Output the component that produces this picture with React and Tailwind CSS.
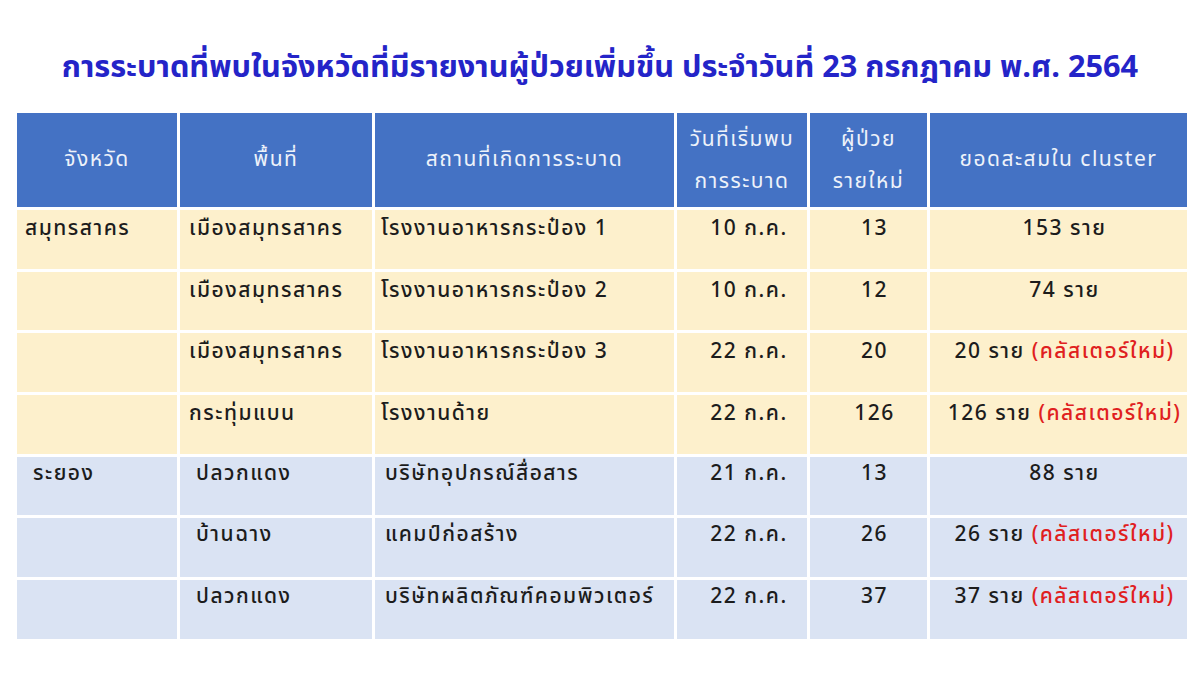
import React from "react";

const font = { fontFamily: '"Tahoma", "Noto Sans Thai", "Noto Sans", "DejaVu Sans", sans-serif' };

const rows = [
  { p: "สมุทรสาคร", a: "เมืองสมุทรสาคร", s: "โรงงานอาหารกระป๋อง 1", d: "10 ก.ค.", n: "13", c: "153 ราย", nw: false, y: true },
  { p: "", a: "เมืองสมุทรสาคร", s: "โรงงานอาหารกระป๋อง 2", d: "10 ก.ค.", n: "12", c: "74 ราย", nw: false, y: true },
  { p: "", a: "เมืองสมุทรสาคร", s: "โรงงานอาหารกระป๋อง 3", d: "22 ก.ค.", n: "20", c: "20 ราย", nw: true, y: true },
  { p: "", a: "กระทุ่มแบน", s: "โรงงานด้าย", d: "22 ก.ค.", n: "126", c: "126 ราย", nw: true, y: true },
  { p: "ระยอง", a: "ปลวกแดง", s: "บริษัทอุปกรณ์สื่อสาร", d: "21 ก.ค.", n: "13", c: "88 ราย", nw: false, y: false },
  { p: "", a: "บ้านฉาง", s: "แคมป์ก่อสร้าง", d: "22 ก.ค.", n: "26", c: "26 ราย", nw: true, y: false },
  { p: "", a: "ปลวกแดง", s: "บริษัทผลิตภัณฑ์คอมพิวเตอร์", d: "22 ก.ค.", n: "37", c: "37 ราย", nw: true, y: false },
];

export default function App() {
  return (
    <div className="w-[1200px] h-[675px] bg-white overflow-hidden" style={font}>
      <h1 className="pt-[46px] text-center text-[30.7px] leading-[44px] font-bold text-[#2424c8]">
        การระบาดที่พบในจังหวัดที่มีรายงานผู้ป่วยเพิ่มขึ้น ประจำวันที่ 23 กรกฎาคม พ.ศ. 2564
      </h1>
      <div className="ml-[17px] mt-[23px] grid grid-cols-[160px_192px_299px_130px_117px_257px] gap-[3px] text-[21px] font-medium tracking-[1.5px] text-[#1c1c1c]">
        <div className="h-[94px] bg-[#4472c4] text-[#eef2fa] font-normal flex items-center justify-center">จังหวัด</div>
        <div className="h-[94px] bg-[#4472c4] text-[#eef2fa] font-normal flex items-center justify-center">พื้นที่</div>
        <div className="h-[94px] bg-[#4472c4] text-[#eef2fa] font-normal flex items-center justify-center">สถานที่เกิดการระบาด</div>
        <div className="h-[94px] bg-[#4472c4] text-[#eef2fa] font-normal flex flex-col items-center justify-center leading-[42px] pt-[2px]">
          <span>วันที่เริ่มพบ</span>
          <span>การระบาด</span>
        </div>
        <div className="h-[94px] bg-[#4472c4] text-[#eef2fa] font-normal flex flex-col items-center justify-center leading-[42px] pt-[2px]">
          <span>ผู้ป่วย</span>
          <span>รายใหม่</span>
        </div>
        <div className="h-[94px] bg-[#4472c4] text-[#eef2fa] font-normal flex items-center justify-center">ยอดสะสมใน cluster</div>
        {rows.map((r, i) => (
          <React.Fragment key={i}>
            <div className={`h-[58.7px] leading-[28px] ${r.y ? "pt-[5px] bg-[#fdf0cc] pl-[8px]" : "pt-[3px] bg-[#dae3f3] pl-[16px]"}`}>{r.p}</div>
            <div className={`h-[58.7px] leading-[28px] ${r.y ? "pt-[5px] bg-[#fdf0cc] pl-[9px]" : "pt-[3px] bg-[#dae3f3] pl-[16px]"}`}>{r.a}</div>
            <div className={`h-[58.7px] leading-[28px] ${r.y ? "pt-[5px] bg-[#fdf0cc] pl-[6px]" : "pt-[3px] bg-[#dae3f3] pl-[10px]"}`}>{r.s}</div>
            <div className={`h-[58.7px] leading-[28px] text-center pl-[14px] ${r.y ? "pt-[5px] bg-[#fdf0cc]" : "pt-[3px] bg-[#dae3f3]"}`}>{r.d}</div>
            <div className={`h-[58.7px] leading-[28px] text-center pl-[12px] ${r.y ? "pt-[5px] bg-[#fdf0cc]" : "pt-[3px] bg-[#dae3f3]"}`}>{r.n}</div>
            <div className={`h-[58.7px] leading-[28px] text-center pl-[12px] whitespace-nowrap ${r.y ? "pt-[5px] bg-[#fdf0cc]" : "pt-[3px] bg-[#dae3f3]"}`}>
              {r.c}
              {r.nw && <span className="text-[#e0201e]"> (คลัสเตอร์ใหม่)</span>}
            </div>
          </React.Fragment>
        ))}
      </div>
    </div>
  );
}
